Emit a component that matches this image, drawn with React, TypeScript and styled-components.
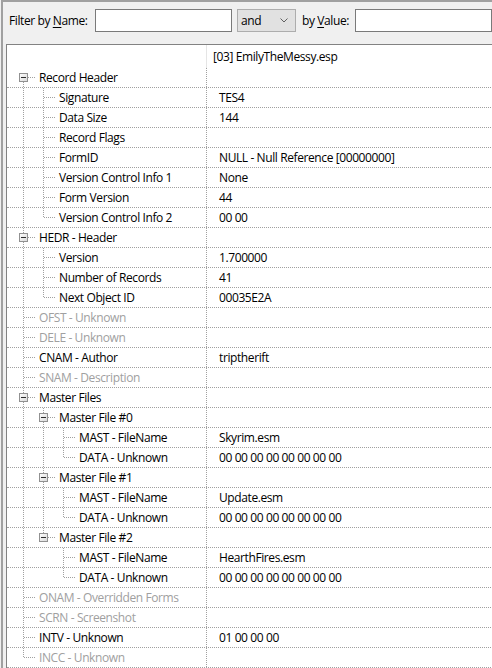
import React from 'react'
import styled, { createGlobalStyle } from 'styled-components'

const GlobalStyle = createGlobalStyle`
  html, body {
    margin: 0;
    padding: 0;
    background: #f0f0f0;
  }
  body {
    font-family: "Open Sans", "Noto Sans", "Liberation Sans", sans-serif;
    font-size: 12px;
    letter-spacing: -0.4px;
    color: #000;
    overflow: hidden;
  }
`

const Window = styled.div`
  width: 491px;
  height: 668px;
  margin-left: 1px;
  box-sizing: border-box;
  border-top: 2px solid #a0a0a0;
  border-left: 2px solid #a0a0a0;
  overflow: hidden;
`

const FilterBar = styled.div`
  display: flex;
  align-items: flex-start;
  height: 42px;
  box-sizing: border-box;
  padding: 7px 0 0 6px;
`

const Label = styled.label<{ $width: number }>`
  width: ${p => p.$width}px;
  flex: none;
  line-height: 23px;
  white-space: nowrap;

  u {
    text-decoration: underline;
    text-underline-offset: 2px;
  }
`

const TextBox = styled.input`
  width: 137px;
  height: 23px;
  box-sizing: border-box;
  flex: none;
  margin: 0 5px 0 0;
  border: 1px solid #7a7a7a;
  background: #fff;
  padding: 0 3px;
  font: inherit;
  outline: none;
`

const Combo = styled.div`
  width: 59px;
  height: 23px;
  box-sizing: border-box;
  flex: none;
  margin-right: 6px;
  display: flex;
  align-items: center;
  justify-content: space-between;
  padding: 0 7px 0 3px;
  background: #e1e1e1;
  border: 1px solid #adadad;
  line-height: 21px;
`

const Panel = styled.div`
  margin-left: 3px;
  width: 520px;
  height: 640px;
  background: #fff;
  border-top: 1px solid #828282;
  border-left: 1px solid #828282;
`

const Row = styled.div<{ $head?: boolean }>`
  display: flex;
  height: ${p => (p.$head ? 23 : 20)}px;
  box-sizing: border-box;
  border-bottom: ${p => (p.$head ? 'none' : '1px dotted #a0a0a0')};
`

const NameCell = styled.div<{ $muted?: boolean }>`
  width: 199px;
  flex: none;
  display: flex;
  align-items: flex-start;
  white-space: nowrap;
  overflow: hidden;
  color: ${p => (p.$muted ? '#a0a0a0' : '#000')};
`

const NameText = styled.span`
  line-height: 19px;
`

const ValueCell = styled.div<{ $head?: boolean }>`
  flex: 1;
  display: flex;
  align-items: center;
  white-space: nowrap;
  padding-left: ${p => (p.$head ? 6 : 12)}px;
  border-left: ${p => (p.$head ? '1px solid #e5e5e5' : '1px dotted #a0a0a0')};
`

const Guides = styled.svg`
  flex: none;
  overflow: visible;
  shape-rendering: crispEdges;
`

type Node = {
  name: string
  value?: string
  muted?: boolean
  children?: Node[]
}

const tree: Node[] = [
  {
    name: 'Record Header',
    children: [
      { name: 'Signature', value: 'TES4' },
      { name: 'Data Size', value: '144' },
      { name: 'Record Flags' },
      { name: 'FormID', value: 'NULL - Null Reference [00000000]' },
      { name: 'Version Control Info 1', value: 'None' },
      { name: 'Form Version', value: '44' },
      { name: 'Version Control Info 2', value: '00 00' },
    ],
  },
  {
    name: 'HEDR - Header',
    children: [
      { name: 'Version', value: '1.700000' },
      { name: 'Number of Records', value: '41' },
      { name: 'Next Object ID', value: '00035E2A' },
    ],
  },
  { name: 'OFST - Unknown', muted: true },
  { name: 'DELE - Unknown', muted: true },
  { name: 'CNAM - Author', value: 'triptherift' },
  { name: 'SNAM - Description', muted: true },
  {
    name: 'Master Files',
    children: ['Skyrim.esm', 'Update.esm', 'HearthFires.esm'].map((file, i) => ({
      name: `Master File #${i}`,
      children: [
        { name: 'MAST - FileName', value: file },
        { name: 'DATA - Unknown', value: '00 00 00 00 00 00 00 00' },
      ],
    })),
  },
  { name: 'ONAM - Overridden Forms', muted: true },
  { name: 'SCRN - Screenshot', muted: true },
  { name: 'INTV - Unknown', value: '01 00 00 00' },
  { name: 'INCC - Unknown', muted: true },
]

type FlatRow = {
  node: Node
  depth: number
  lastPath: boolean[] // is-last flag for each level down to this node
  first: boolean
}

function flatten(nodes: Node[], depth = 0, lastPath: boolean[] = [], out: FlatRow[] = []) {
  nodes.forEach((node, i) => {
    const path = [...lastPath, i === nodes.length - 1]
    out.push({ node, depth, lastPath: path, first: depth === 0 && i === 0 })
    if (node.children) flatten(node.children, depth + 1, path, out)
  })
  return out
}

const rows = flatten(tree)

const DOTS = '1 1'
const LINE = '#a0a0a0'

const TreeGuides = ({ row }: { row: FlatRow }) => {
  const { depth, lastPath, first, node } = row
  const width = 32 + depth * 20
  const cx = 16 + depth * 20
  const cy = 9
  const lines: React.ReactNode[] = []

  // pass-through lines for ancestors that still have siblings below
  for (let l = 0; l < depth; l++) {
    if (!lastPath[l]) {
      const x = 16 + l * 20 + 0.5
      lines.push(<line key={`a${l}`} x1={x} y1={0} x2={x} y2={20} stroke={LINE} strokeDasharray={DOTS} />)
    }
  }

  const x = cx + 0.5
  if (!first) lines.push(<line key="up" x1={x} y1={0} x2={x} y2={10} stroke={LINE} strokeDasharray={DOTS} />)
  if (!lastPath[depth]) lines.push(<line key="down" x1={x} y1={10} x2={x} y2={20} stroke={LINE} strokeDasharray={DOTS} />)

  const hasBox = !!node.children
  lines.push(
    <line key="h" x1={hasBox ? cx + 5 : cx + 1} y1={cy + 0.5} x2={cx + 13} y2={cy + 0.5} stroke={LINE} strokeDasharray={DOTS} />
  )

  return (
    <Guides width={width} height={20} viewBox={`0 0 ${width} 20`}>
      <defs>
        <linearGradient id="boxFill" x1="0" y1="0" x2="1" y2="1">
          <stop offset="0" stopColor="#ffffff" />
          <stop offset="1" stopColor="#d8d8d8" />
        </linearGradient>
      </defs>
      {lines}
      {hasBox && (
        <g>
          <rect x={cx - 3.5} y={cy - 3.5} width={8} height={8} fill="url(#boxFill)" stroke="#919191" />
          <line x1={cx - 2} y1={cy + 0.5} x2={cx + 3} y2={cy + 0.5} stroke="#2b2b2b" />
        </g>
      )}
    </Guides>
  )
}

const Chevron = () => (
  <svg width="8" height="5" viewBox="0 0 8 5">
    <polyline points="0.5,0.5 4,4 7.5,0.5" fill="none" stroke="#606060" strokeWidth="1" />
  </svg>
)

export default function App() {
  return (
    <>
      <GlobalStyle />
      <Window>
        <FilterBar>
          <Label $width={86}>
            Filter by <u>N</u>ame:
          </Label>
          <TextBox />
          <Combo>
            <span>and</span>
            <Chevron />
          </Combo>
          <Label $width={53}>
            by <u>V</u>alue:
          </Label>
          <TextBox />
        </FilterBar>
        <Panel>
          <Row $head>
            <NameCell />
            <ValueCell $head>[03] EmilyTheMessy.esp</ValueCell>
          </Row>
          {rows.map((row, i) => (
            <Row key={i}>
              <NameCell $muted={row.node.muted}>
                <TreeGuides row={row} />
                <NameText>{row.node.name}</NameText>
              </NameCell>
              <ValueCell>{row.node.value}</ValueCell>
            </Row>
          ))}
        </Panel>
      </Window>
    </>
  )
}
